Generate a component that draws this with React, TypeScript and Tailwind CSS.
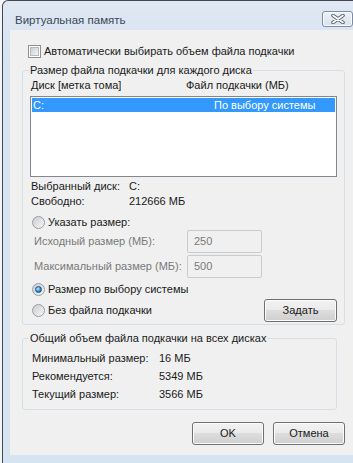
import React from 'react';

// ── Small Win7-style controls ─────────────────────────────────────────────────
function CheckBox() {
  return (
    <span className="flex w-[13px] h-[13px] shrink-0 border border-[#8e8f8f] bg-white p-[1px]">
      <span className="flex-1 border border-[#b5b9bd] bg-[linear-gradient(135deg,#cbcfd5,#f4f4f4)]" />
    </span>
  );
}

function Radio({ checked = false }: { checked?: boolean }) {
  return (
    <span className="flex items-center justify-center w-[13px] h-[13px] shrink-0 rounded-full border border-[#9a9ea3] bg-[linear-gradient(135deg,#c9ccd1,#f7f7f7)]">
      {checked && (
        <span className="w-[7px] h-[7px] rounded-full border border-[#1c5180] bg-[radial-gradient(circle_at_35%_35%,#c4e6fb,#2a8ad4_60%,#14508a)]" />
      )}
    </span>
  );
}

function Button({ label, className = '' }: { label: string; className?: string }) {
  return (
    <div
      className={
        'flex items-center justify-center h-[23px] rounded-[3px] border border-[#707070] ' +
        'bg-[linear-gradient(#f2f2f2_0%,#ebebeb_45%,#dddddd_50%,#cfcfcf_100%)] ' +
        'shadow-[inset_0_0_0_1px_#fcfcfc] text-[#1a1a1a] ' +
        className
      }
    >
      {label}
    </div>
  );
}

function DisabledInput({ value }: { value: string }) {
  return (
    <div className="flex items-center w-[75px] h-[23px] border border-[#c9cccf] rounded-[2px] bg-[#f0f0f0] pl-[6px] text-[#7a7a7a]">
      {value}
    </div>
  );
}

// ── Dialog ────────────────────────────────────────────────────────────────────
export default function App() {
  return (
    <div className="flex w-[353px] h-[463px] overflow-hidden whitespace-nowrap bg-white font-['Liberation_Sans',Arial,sans-serif] text-[11px] leading-[15px] text-[#1a1a1a]">
      {/* strip of the window behind */}
      <div className="w-[2px] shrink-0 bg-[#f4f4f4]" />

      {/* window frame */}
      <div className="flex flex-col flex-1 rounded-tl-[6px] border-l border-t border-[#404a56] bg-[linear-gradient(#dfe8f3,#d6e3f1_60px,#d6e3f1)]">
        {/* title bar */}
        <div className="flex items-start h-[29px] shrink-0 pl-[12px] pr-[9px]">
          <span className="mt-[12px] text-[11.5px] text-[#3c4654]">Виртуальная память</span>
          <div className="ml-auto mt-[10px] flex items-center justify-center w-[31px] h-[16px] rounded-[3px] border border-[#7e8ba0] bg-[linear-gradient(#eef2f8,#d9e1ec)] shadow-[inset_0_0_0_1px_#f8fafc]">
            <svg width="14" height="10" viewBox="0 0 14 10">
              <path d="M2 1.5 L12 8.5 M12 1.5 L2 8.5" stroke="#5d6774" strokeWidth="3.6" strokeLinecap="round" />
              <path d="M2 1.5 L12 8.5 M12 1.5 L2 8.5" stroke="#ffffff" strokeWidth="1.6" strokeLinecap="round" />
            </svg>
          </div>
        </div>

        {/* client area */}
        <div className="flex flex-col ml-[7px] mr-[5px] mb-[8px] flex-1 bg-[#f0f0f0] pt-[14px] px-[12px]">
          {/* auto checkbox */}
          <div className="flex items-center gap-[3px] h-[15px] pl-[6px]">
            <CheckBox />
            <span>Автоматически выбирать объем файла подкачки</span>
          </div>

          {/* group 1 */}
          <fieldset className="mt-[4px] w-[315px] rounded-[3px] border border-[#d5dfe5] px-[7px] pb-[3px]">
            <legend className="ml-[-1px] px-[1px]">Размер файла подкачки для каждого диска</legend>

            <div className="flex h-[15px] pl-[1px]">
              <span className="w-[155px]">Диск [метка тома]</span>
              <span>Файл подкачки (МБ)</span>
            </div>

            <div className="mt-[3px] h-[81px] w-[307px] border border-[#828790] bg-white p-[1px]">
              <div className="flex items-center h-[14px] bg-[#3399ff] text-white pl-[1px]">
                <span className="w-[181px]">C:</span>
                <span>По выбору системы</span>
              </div>
            </div>

            <div className="mt-[2px] pl-[1px]">
              <div className="flex h-[15px]">
                <span className="w-[98px]">Выбранный диск:</span>
                <span>C:</span>
              </div>
              <div className="flex h-[15px]">
                <span className="w-[98px]">Свободно:</span>
                <span>212666 МБ</span>
              </div>
            </div>

            <div className="mt-[6px] flex items-center gap-[3px] h-[15px] pl-[2px]">
              <Radio />
              <span>Указать размер:</span>
            </div>

            <div className="flex items-center h-[22px] pl-[4px] text-[#7a7a7a]">
              <span className="w-[153px]">Исходный размер (МБ):</span>
              <DisabledInput value="250" />
            </div>
            <div className="mt-[3px] flex items-center h-[22px] pl-[4px] text-[#7a7a7a]">
              <span className="w-[153px]">Максимальный размер (МБ):</span>
              <DisabledInput value="500" />
            </div>

            <div className="mt-[5px] flex items-center gap-[3px] h-[15px] pl-[2px]">
              <Radio checked />
              <span>Размер по выбору системы</span>
            </div>

            <div className="mt-[2px] flex items-center h-[22px] pl-[2px]">
              <Radio />
              <span className="ml-[3px]">Без файла подкачки</span>
              <Button label="Задать" className="ml-auto w-[73px] h-[22px]" />
            </div>
          </fieldset>

          {/* group 2 */}
          <fieldset className="mt-[6px] w-[315px] rounded-[3px] border border-[#d5dfe5] px-[9px] pb-[6px]">
            <legend className="ml-[-3px] px-[1px]">Общий объем файла подкачки на всех дисках</legend>
            <div className="mt-[3px]">
              <div className="flex items-center h-[18px]">
                <span className="w-[127px]">Минимальный размер:</span>
                <span>16 МБ</span>
              </div>
              <div className="flex items-center h-[18px]">
                <span className="w-[127px]">Рекомендуется:</span>
                <span>5349 МБ</span>
              </div>
              <div className="flex items-center h-[18px]">
                <span className="w-[127px]">Текущий размер:</span>
                <span>3566 МБ</span>
              </div>
            </div>
          </fieldset>

          {/* dialog buttons */}
          <div className="mt-[12px] flex justify-end gap-[9px]">
            <Button label="OK" className="w-[72px]" />
            <Button label="Отмена" className="w-[72px]" />
          </div>
        </div>
      </div>
    </div>
  );
}
